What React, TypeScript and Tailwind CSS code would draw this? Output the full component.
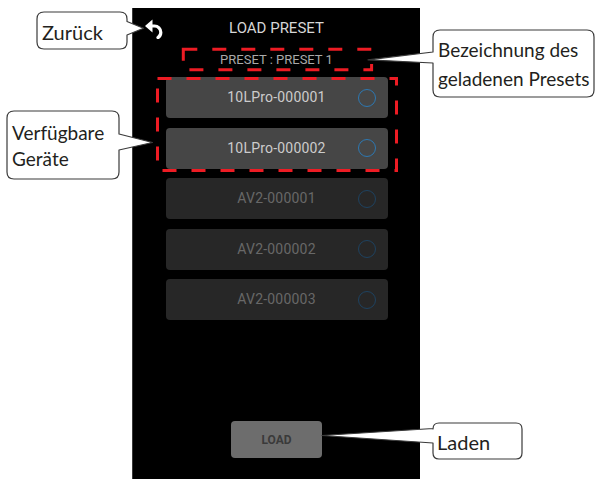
const devices = [
  { name: '10LPro-000001', active: true },
  { name: '10LPro-000002', active: true },
  { name: 'AV2-000001', active: false },
  { name: 'AV2-000002', active: false },
  { name: 'AV2-000003', active: false },
];

function BackArrow() {
  return (
    <svg width="18" height="20" viewBox="0 0 18 20">
      <polygon points="0,7 7.5,0.5 7.5,13.5" fill="#fff" />
      <path
        d="M6 7 H9.5 A6.3 6.3 0 0 1 15.8 13.3 A6.3 6.3 0 0 1 13 18.6"
        fill="none"
        stroke="#fff"
        strokeWidth="3.2"
        strokeLinecap="round"
      />
    </svg>
  );
}

function DeviceRow({ name, active }: { name: string; active: boolean }) {
  return (
    <div
      className={
        active
          ? 'grid h-[41px] w-[222px] grid-cols-[30px_1fr_30px] items-center rounded-[4px] bg-[#464646]'
          : 'grid h-[41px] w-[222px] grid-cols-[30px_1fr_30px] items-center rounded-[4px] bg-[#272727]'
      }
    >
      <span />
      <span
        className={
          active
            ? "text-center font-['Roboto',sans-serif] text-[14px] tracking-[0.2px] text-[#cccccc]"
            : "text-center font-['Roboto',sans-serif] text-[14px] tracking-[0.2px] text-[#686868]"
        }
      >
        {name}
      </span>
      <span
        className={
          active
            ? 'h-[18px] w-[18px] rounded-full border-[1.5px] border-[#2d78b2]'
            : 'h-[18px] w-[18px] rounded-full border-[1.5px] border-[#1e4260]'
        }
      />
    </div>
  );
}

export default function App() {
  return (
    <div className="relative h-[479px] w-[595px] overflow-hidden bg-white">
      <div className="flex pl-[132px] pt-[8px]">
        <div className="flex h-[471px] w-[288px] flex-col items-center border-l border-[#3a3a3a] bg-black font-['Roboto',sans-serif]">
          <div className="grid h-[40px] w-full grid-cols-[40px_1fr_40px] items-center">
            <div className="pl-[12px] pt-[1px]">
              <BackArrow />
            </div>
            <div className="pt-[1px] text-center text-[15px] text-[#d6d6d6]">LOAD PRESET</div>
            <span />
          </div>
          <div className="mt-[4px] text-[13px] leading-[15px] text-[#a9a9a9]">PRESET : PRESET 1</div>
          <div className="mt-[10px] flex flex-col gap-[9.5px]">
            {devices.map((d) => (
              <DeviceRow key={d.name} name={d.name} active={d.active} />
            ))}
          </div>
          <div className="flex-1" />
          <button className="mb-[21px] h-[37px] w-[91px] rounded-[4px] bg-[#6d6d6d] text-[12px] font-bold text-[#3a3a3a]">
            LOAD
          </button>
        </div>
      </div>

      {/* annotation layer */}
      <svg className="pointer-events-none absolute left-0 top-0" width="595" height="479">
        <rect x="183.3" y="49.2" width="188.3" height="20.5" fill="none" stroke="#ed1c24" strokeWidth="3" strokeDasharray="14 15" />
        <rect x="157.5" y="78.5" width="239" height="92" fill="none" stroke="#ed1c24" strokeWidth="3" strokeDasharray="14 15" />
        <g fill="#fff" stroke="#3a3a3a" strokeWidth="1.2" strokeLinejoin="round">
          <path d="M44 12 H120 Q127 12 127 19 V21.5 L143.5 28.3 L127 35 V42 Q127 49 120 49 H44 Q37 49 37 42 V19 Q37 12 44 12 Z" />
          <path d="M14 111 H112 Q119 111 119 118 V134 L152.5 142.5 L119 150 V172 Q119 179 112 179 H14 Q7 179 7 172 V118 Q7 111 14 111 Z" />
          <path d="M440 30 H587 Q594 30 594 37 V90 Q594 97 587 97 H440 Q433 97 433 90 V63 L368 59.8 L433 52 V37 Q433 30 440 30 Z" />
          <path d="M439 423 H516 Q522 423 522 429 V453 Q522 459 516 459 H439 Q433 459 433 453 V443 L322 435.5 L433 428.5 V429 Q433 423 439 423 Z" />
        </g>
      </svg>

      <div className="absolute left-[42px] top-[22px] font-['Lato',sans-serif] text-[20px] leading-[20px] text-[#231f20]">
        Zurück
      </div>
      <div className="absolute left-[12px] top-[120px] font-['Lato',sans-serif] text-[19px] leading-[26px] text-[#231f20]">
        Verfügbare
        <br />
        Geräte
      </div>
      <div className="absolute left-[438px] top-[35px] font-['Lato',sans-serif] text-[19px] leading-[29px] text-[#231f20]">
        Bezeichnung des
        <br />
        geladenen Presets
      </div>
      <div className="absolute left-[437px] top-[432px] font-['Lato',sans-serif] text-[20px] leading-[20px] text-[#231f20]">
        Laden
      </div>
    </div>
  );
}
